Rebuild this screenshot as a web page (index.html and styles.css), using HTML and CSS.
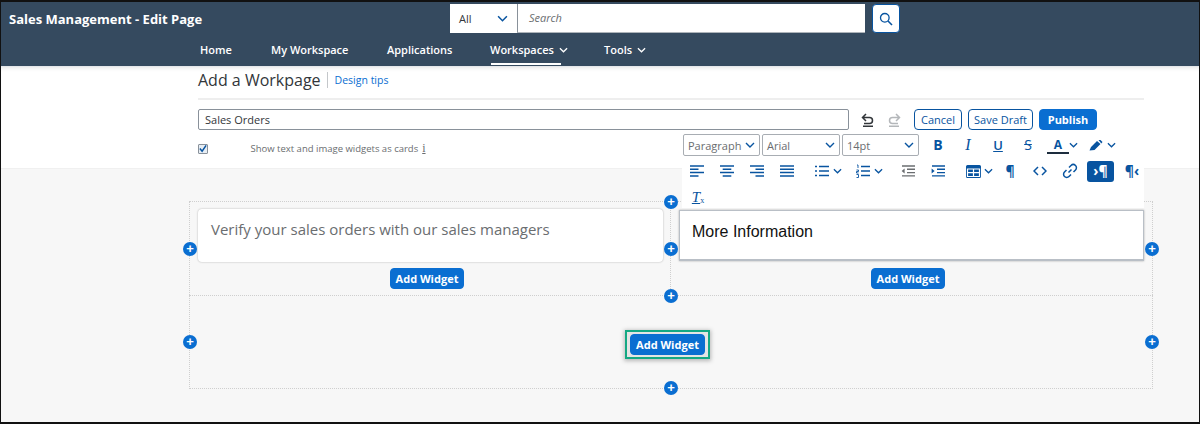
FILE: index.html
```html
<!DOCTYPE html>
<html lang="en">
<head>
    <meta charset="UTF-8">
    <meta name="viewport" content="width=device-width, initial-scale=1.0">
    <title>Sales Management - Edit Page</title>
    <link rel="stylesheet" href="styles.css">
</head>
<body>
    <svg class="defs" width="0" height="0">
        <symbol id="chev" viewBox="0 0 10 6"><path d="M1 1l4 4 4-4" fill="none" stroke="currentColor" stroke-width="1.4"/></symbol>
        <symbol id="align-left" viewBox="0 0 14 12"><path d="M0 1h14M0 4.3h8.5M0 7.6h14M0 10.9h8.5" stroke="currentColor" stroke-width="1.5"/></symbol>
        <symbol id="align-center" viewBox="0 0 14 12"><path d="M0 1h14M2.7 4.3h8.6M0 7.6h14M2.7 10.9h8.6" stroke="currentColor" stroke-width="1.5"/></symbol>
        <symbol id="align-right" viewBox="0 0 14 12"><path d="M0 1h14M5.5 4.3h8.5M0 7.6h14M5.5 10.9h8.5" stroke="currentColor" stroke-width="1.5"/></symbol>
        <symbol id="justify" viewBox="0 0 14 12"><path d="M0 1h14M0 4.3h14M0 7.6h14M0 10.9h14" stroke="currentColor" stroke-width="1.5"/></symbol>
        <symbol id="bullets" viewBox="0 0 14 12"><path d="M4 1.5h10M4 6h10M4 10.5h10M0 1.5h2M0 6h2M0 10.5h2" stroke="currentColor" stroke-width="1.5"/></symbol>
        <symbol id="numbers" viewBox="0 0 14 14"><path d="M5 2.5h9M5 7h9M5 11.5h9" stroke="currentColor" stroke-width="1.5"/><path d="M1 1h1v3M0.5 6h2v1.5h-2v1.5h2M0.5 10.5h2v3h-2" fill="none" stroke="currentColor" stroke-width="0.9"/></symbol>
        <symbol id="outdent" viewBox="0 0 14 12"><path d="M1 1h13M6 4.3h8M6 7.6h8M1 10.9h13" stroke="currentColor" stroke-width="1.4"/><path d="M3.6 3.5L0.6 6l3 2.5z" fill="currentColor"/></symbol>
        <symbol id="indent" viewBox="0 0 14 12"><path d="M1 1h13M6 4.3h8M6 7.6h8M1 10.9h13" stroke="currentColor" stroke-width="1.4"/><path d="M0.6 3.5l3 2.5-3 2.5z" fill="currentColor"/></symbol>
        <symbol id="table" viewBox="0 0 15 13"><path d="M1.5 0h12A1.5 1.5 0 0 1 15 1.5v10a1.5 1.5 0 0 1-1.500 1.500h-12A1.500 1.500 0 0 1 0 11.500v-10A1.500 1.500 0 0 1 1.500 0z" fill="currentColor"/><path d="M1.500 4h12v7.500h-12zM7.500 4v7.500M1.500 7.700h12" fill="none" stroke="#fff" stroke-width="1.200"/></symbol>
        <symbol id="code" viewBox="0 0 14 10"><path d="M5 1L1 5l4 4M9 1l4 4-4 4" fill="none" stroke="currentColor" stroke-width="1.500"/></symbol>
        <symbol id="link" viewBox="0 0 16 16"><path d="M6.500 9.500l3-3M7 4.500l2-2a2.800 2.800 0 0 1 4.500 4.500l-2 2M9 11.500l-2 2A2.800 2.800 0 0 1 2.500 9l2-2" fill="none" stroke="currentColor" stroke-width="1.500"/></symbol>
        <symbol id="pen" viewBox="0 0 15 11"><path d="M0.500 10.500l1.500-3.500 6-6 3.500 3-6 6z M9.500 0l2-0 2 2-1.200 1.500z" fill="currentColor"/></symbol>
        <symbol id="undo" viewBox="0 0 14 14"><path d="M5 1L1.500 4.500 5 8M2 4.500h6.500a3 3 0 0 1 0 6H3M2 13.300h10" fill="none" stroke="currentColor" stroke-width="1.500"/></symbol>
        <symbol id="redo" viewBox="0 0 14 14"><path d="M9 1l3.500 3.500L9 8M12 4.500H5.500a3 3 0 0 0 0 6H11M2 13.300h10" fill="none" stroke="currentColor" stroke-width="1.500"/></symbol>
    </svg>

    <div class="frame">
        <header class="shell">
            <div class="shell-top">
                <div class="app-title">Sales Management - Edit Page</div>
                <div class="search-all">All <svg class="chev-search"><use href="#chev"/></svg></div>
                <div class="search-box">Search</div>
                <div class="search-btn">
                    <svg width="14" height="14" viewBox="0 0 14 14"><circle cx="5.800" cy="5.800" r="4.300" fill="none" stroke="currentColor" stroke-width="1.300"/><path d="M9 9l4 4" stroke="currentColor" stroke-width="1.600"/></svg>
                </div>
            </div>
            <nav class="shell-nav">
                <a class="nav-home">Home</a>
                <a class="nav-my">My Workspace</a>
                <a class="nav-apps">Applications</a>
                <a class="nav-spaces active">Workspaces <svg class="chev-nav"><use href="#chev"/></svg></a>
                <a>Tools <svg class="chev-nav"><use href="#chev"/></svg></a>
            </nav>
        </header>

        <section class="editor">
            <div class="page-head">
                <h1>Add a Workpage</h1>
                <a class="tips">Design tips</a>
            </div>
            <div class="title-row">
                <div class="title-input">Sales Orders</div>
                <svg class="history" width="14" height="14"><use href="#undo"/></svg>
                <svg class="history off" width="14" height="14"><use href="#redo"/></svg>
                <button class="btn outline cancel">Cancel</button>
                <button class="btn outline">Save Draft</button>
                <button class="btn primary">Publish</button>
            </div>
            <div class="check-row">
                <span class="check">
                    <svg width="9" height="9" viewBox="0 0 9 9"><path d="M1 4.500l2.500 3L8 1" fill="none" stroke="#0854a0" stroke-width="1.700"/></svg>
                </span>
                Show text and image widgets as cards
                <span class="info">i</span>
            </div>

            <div class="toolbar">
                <div class="tool-row">
                    <div class="pick pick-para">Paragraph <svg class="chev-pick"><use href="#chev"/></svg></div>
                    <div class="pick">Arial <svg class="chev-pick"><use href="#chev"/></svg></div>
                    <div class="pick pick-size">14pt <svg class="chev-pick"><use href="#chev"/></svg></div>
                    <span class="tool first-b glyph bold">B</span>
                    <span class="tool glyph italic">I</span>
                    <span class="tool glyph under">U</span>
                    <span class="tool glyph strike">S</span>
                    <span class="tool narrow glyph color-a">A</span>
                    <svg class="chev-tool"><use href="#chev"/></svg>
                    <span class="tool pen"><svg width="15" height="11"><use href="#pen"/></svg></span>
                    <svg class="chev-tool"><use href="#chev"/></svg>
                </div>
                <div class="tool-row icons">
                    <span class="tool"><svg width="14" height="12"><use href="#align-left"/></svg></span>
                    <span class="tool"><svg width="14" height="12"><use href="#align-center"/></svg></span>
                    <span class="tool"><svg width="14" height="12"><use href="#align-right"/></svg></span>
                    <span class="tool"><svg width="14" height="12"><use href="#justify"/></svg></span>
                    <span class="tool tight"><svg width="14" height="12"><use href="#bullets"/></svg></span>
                    <svg class="chev-tool"><use href="#chev"/></svg>
                    <span class="tool tight"><svg width="14" height="14"><use href="#numbers"/></svg></span>
                    <svg class="chev-tool"><use href="#chev"/></svg>
                    <span class="tool muted"><svg width="14" height="12"><use href="#outdent"/></svg></span>
                    <span class="tool"><svg width="14" height="12"><use href="#indent"/></svg></span>
                    <span class="tool tight"><svg width="15" height="13"><use href="#table"/></svg></span>
                    <svg class="chev-tool small"><use href="#chev"/></svg>
                    <span class="tool glyph pilcrow dotted">¶</span>
                    <span class="tool"><svg width="14" height="10"><use href="#code"/></svg></span>
                    <span class="tool"><svg width="16" height="16"><use href="#link"/></svg></span>
                    <span class="tool ltr glyph">›¶</span>
                    <span class="tool glyph pilcrow rtl">¶‹</span>
                </div>
                <div class="tool-row">
                    <span class="tool clear glyph"><span class="clear-t">T</span><span class="clear-x">x</span></span>
                </div>
            </div>
        </section>

        <section class="canvas">
            <div class="row">
                <div class="cell">
                    <div class="card">Verify your sales orders with our sales managers</div>
                    <button class="btn primary add">Add Widget</button>
                </div>
                <div class="cell cell-right">
                    <div class="card card-edit">More Information</div>
                    <button class="btn primary add">Add Widget</button>
                </div>
                <span class="plus at-left at-mid-y">+</span>
                <span class="plus at-center at-mid-y">+</span>
                <span class="plus at-right at-mid-y">+</span>
                <span class="plus at-center at-top">+</span>
            </div>
            <div class="row row-single">
                <div class="highlight"><button class="btn primary add-main">Add Widget</button></div>
                <span class="plus at-left at-mid-y">+</span>
                <span class="plus at-right at-mid-y">+</span>
                <span class="plus at-center at-top">+</span>
                <span class="plus at-center at-bottom">+</span>
            </div>
        </section>
    </div>
</body>
</html>
```

FILE: styles.css
```css
* {
    box-sizing: border-box;
}
body {
    margin: 0;
    font-family: "Open Sans", Arial, sans-serif;
    background-color: #f7f7f7;
}
.defs {
    position: absolute;
}
.frame {
    position: relative;
    height: 424px;
    overflow: hidden;
    border: 1px solid #111;
    border-width: 2px 1px;
    background-color: #f7f7f7;
}

/* shell bar */
.shell {
    height: 65px;
    background-color: #354a5f;
    border-bottom: 1px solid #e4e7ea;
    color: #fff;
}
.shell-top {
    display: flex;
    height: 33px;
    padding: 2px 0 0 8px;
}
.app-title {
    width: 441px;
    padding-top: 6px;
    font-size: 13px;
    font-weight: 700;
    white-space: nowrap;
}
.search-all {
    display: flex;
    align-items: center;
    justify-content: space-between;
    width: 67px;
    height: 29px;
    padding: 0 9px 0 9px;
    background-color: #fff;
    color: #32363a;
    font-size: 11px;
}
.search-box {
    width: 348px;
    height: 29px;
    padding: 6px 11px;
    background-color: #fff;
    border-left: 1px solid #89919a;
    border-bottom: 1px solid #aeb4ba;
    color: #6a6d70;
    font-size: 11px;
    font-style: italic;
}
.search-btn {
    display: flex;
    align-items: center;
    justify-content: center;
    width: 28px;
    height: 29px;
    margin-left: 7px;
    background-color: #fff;
    border: 1px solid #0854a0;
    border-radius: 4px;
    color: #0854a0;
}
.chev-search {
    width: 11px;
    height: 7px;
    color: #0854a0;
}
.shell-nav {
    display: flex;
    padding-left: 199px;
    font-size: 11px;
    font-weight: 600;
    line-height: 30px;
}
.shell-nav a {
    display: block;
    height: 30px;
    white-space: nowrap;
}
.nav-home { width: 71px; }
.nav-my { width: 116px; }
.nav-apps { width: 103px; }
.nav-spaces { width: 114px; }
.shell-nav .active {
    position: relative;
}
.shell-nav .active::after {
    content: "";
    position: absolute;
    left: 1px;
    top: 28px;
    width: 70px;
    height: 2px;
    background-color: #fff;
}
.chev-nav {
    width: 9px;
    height: 6px;
    margin-left: 2px;
    vertical-align: 1px;
}

/* editor header */
.editor {
    position: relative;
    height: 102px;
    padding: 0 55px 0 197px;
    background-color: #fff;
    border-bottom: 1px solid #f0f0f0;
    box-shadow: inset 0 4px 4px -3px #e6e6e6;
}
.page-head {
    display: flex;
    align-items: center;
    height: 33px;
    padding-bottom: 6px;
    border-bottom: 2px solid #eeeeee;
}
.page-head h1 {
    margin: 0;
    padding-right: 6px;
    border-right: 1px solid #c4c7ca;
    color: #32363a;
    font-size: 16px;
    font-weight: 400;
    line-height: 16px;
}
.tips {
    margin-left: 7px;
    color: #0a6ed1;
    font-size: 10.500px;
}
.title-row {
    display: flex;
    align-items: center;
    height: 21px;
    margin-top: 9px;
}
.title-input {
    width: 651px;
    height: 21px;
    padding-left: 6px;
    border: 1px solid #89919a;
    border-radius: 2px;
    color: #32363a;
    font-size: 11px;
    line-height: 19px;
}
.history {
    margin-left: 12px;
    color: #32363a;
}
.history.off {
    color: #b4b7ba;
}
.btn {
    height: 21px;
    padding: 0;
    border: 1px solid #0854a0;
    border-radius: 4px;
    font-family: inherit;
    font-size: 11px;
}
.outline {
    width: 65px;
    margin-left: 6px;
    background-color: #fff;
    color: #0854a0;
}
.cancel {
    width: 48px;
    margin-left: 13px;
}
.primary {
    width: 58px;
    margin-left: 6px;
    background-color: #0a6ed1;
    border-color: #0a6ed1;
    color: #fff;
    font-weight: 700;
}
.check-row {
    display: flex;
    align-items: center;
    height: 19px;
    margin-top: 9px;
    color: #6a6d70;
    font-size: 9.500px;
    white-space: pre;
}
.check {
    display: flex;
    align-items: center;
    justify-content: center;
    width: 10px;
    height: 10px;
    margin-right: 3px;
    background-color: #e8eef4;
    border: 1px solid #89919a;
    border-radius: 1px;
}
.info {
    margin-left: 4px;
    font-family: "Liberation Serif", serif;
    font-size: 12px;
    text-decoration: underline;
}

/* rich text toolbar, floats over the canvas */
.toolbar {
    position: absolute;
    top: 65px;
    right: 55px;
    z-index: 2;
    width: 462px;
    height: 76px;
    background-color: #fff;
    color: #0854a0;
}
.tool-row {
    display: flex;
    align-items: center;
    height: 26px;
    padding-left: 1px;
}
.tool-row.icons {
    padding-left: 0;
}
.pick {
    display: flex;
    align-items: center;
    justify-content: space-between;
    width: 78px;
    height: 22px;
    margin-right: 2px;
    padding: 0 4px;
    border: 1px solid #a8adb3;
    border-radius: 2px;
    color: #6a6d70;
    font-size: 11px;
}
.pick-para {
    width: 77px;
}
.pick-size {
    width: 77px;
}
.chev-pick {
    width: 10px;
    height: 6px;
    color: #0854a0;
}
.tool {
    display: flex;
    align-items: center;
    justify-content: center;
    flex: none;
    width: 30px;
    height: 22px;
}
.tool.first-b {
    margin-left: 2px;
}
.tool.narrow {
    width: 22px;
    margin-left: 4px;
}
.tool.tight {
    width: 22px;
    margin-left: 9px;
}
.tool.muted {
    margin-left: 9px;
    color: #6a6d70;
}
.tool.pen {
    width: 22px;
    margin-left: 6px;
}
.chev-tool {
    flex: none;
    width: 9px;
    height: 6px;
    margin: 0 1px 0 0;
}
.chev-tool.small {
    width: 9px;
    margin-right: 2px;
}
.glyph {
    font-size: 14px;
    font-weight: 700;
    line-height: 16px;
}
.italic {
    font-family: "Liberation Serif", serif;
    font-style: italic;
    font-weight: 400;
    font-size: 16px;
}
.under {
    font-size: 13px;
    font-weight: 600;
    text-decoration: underline;
}
.strike {
    font-weight: 400;
    text-decoration: line-through;
}
.color-a {
    font-size: 12px;
    height: 17px;
    line-height: 15px;
    border-bottom: 2px solid #1d2d3e;
    width: 15px;
}
.dotted {
    width: 30px;
    background: none;
}
.ltr {
    width: 27px;
    height: 21px;
    margin: 0 1px 0 2px;
    background-color: #0854a0;
    border-radius: 3px;
    color: #fff;
}
.rtl {
    margin-left: 2px;
}
.clear {
    width: 30px;
    font-family: "Liberation Serif", serif;
    font-weight: 400;
}
.clear-t {
    font-size: 15px;
    font-style: italic;
    text-decoration: underline;
}
.clear-x {
    font-size: 8px;
    margin-top: 7px;
}

/* widget canvas */
.canvas {
    width: 964px;
    margin: 32px 0 0 188px;
}
.row {
    position: relative;
    display: grid;
    grid-template-columns: 1fr 1fr;
    height: 94px;
    border: 1px dotted #cfcfcf;
    border-bottom: 0;
}
.row-single {
    display: flex;
    align-items: center;
    justify-content: center;
    padding: 5px 7px 0 0;
    border-bottom: 1px dotted #cfcfcf;
}
.cell {
    display: flex;
    flex-direction: column;
    align-items: center;
    padding: 7px 7px 0 8px;
    border-right: 1px dotted #cfcfcf;
}
.cell-right {
    padding: 7px 8px 0 8px;
    border-right: 0;
}
.card {
    width: 100%;
    height: 53px;
    padding: 10px 13px;
    background-color: #fff;
    border-radius: 4px;
    box-shadow: 0 0 2px rgba(0, 0, 0, 0.3);
    color: #6a6d70;
    font-size: 15px;
}
.card-edit {
    height: 51px;
    margin-top: 1px;
    margin-bottom: 1px;
    padding: 12px 12px;
    border: 1px solid #b9bfc6;
    border-bottom-width: 2px;
    border-radius: 0;
    color: #111;
    font-family: "Liberation Sans", Arial, sans-serif;
    font-size: 16px;
}
.add {
    width: 74px;
    margin: 6px 7px 0 0;
}
.highlight {
    display: flex;
    padding: 2px 3px;
    background-color: #e4e4e4;
    outline: 2px solid #14a883;
    outline-offset: -1px;
    box-shadow: 0 1px 4px 2px rgba(0, 0, 0, 0.25);
    border: 1px solid #14a883;
}
.add-main {
    width: 75px;
    margin: 0;
}
.plus {
    position: absolute;
    z-index: 1;
    display: flex;
    align-items: center;
    justify-content: center;
    width: 14px;
    height: 14px;
    background-color: #0a6ed1;
    border-radius: 50%;
    color: #fff;
    font-family: "Liberation Sans", Arial, sans-serif;
    font-size: 13px;
    font-weight: 700;
    line-height: 14px;
    transform: translate(-50%, -50%);
}
.at-left { left: 0; }
.at-center { left: 50%; }
.at-right { left: 100%; }
.at-top { top: 0; }
.at-mid-y { top: 50%; }
.at-bottom { top: 100%; }
```
